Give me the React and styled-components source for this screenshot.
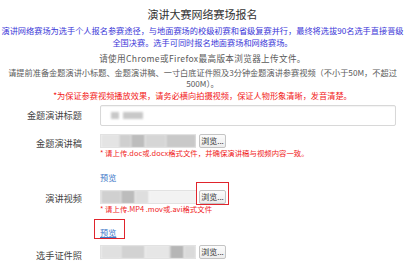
import styled, { createGlobalStyle } from "styled-components";

const Global = createGlobalStyle`
  body {
    margin: 0;
    background: #fff;
    font-family: "Noto Sans CJK SC", "Liberation Sans", sans-serif;
  }
`

const Page = styled.div`
  width: 405px;
  padding-top: 7px;
  color: #555;
`

const Title = styled.h1`
  margin: 0;
  font-size: 11px;
  font-weight: normal;
  line-height: 14px;
  text-align: center;
  color: #333;
`

const Text = styled.p`
  margin: ${props => props.top || 0}px 0 0;
  font-size: ${props => props.size || 8.2}px;
  letter-spacing: ${props => props.spacing || 0}px;
  line-height: 11.5px;
  text-align: center;
  color: ${props => props.tone === 'blue' ? '#3a36d8' : props.tone === 'red' ? '#f21818' : '#5a5a5a'};
`

const Form = styled.div`
  display: flex;
  flex-direction: column;
  gap: 8px;
  margin-top: 4px;
`

const Row = styled.div`
  display: grid;
  grid-template-columns: 82px 296px;
  column-gap: 18px;
  align-items: start;
`

const Label = styled.label`
  font-size: 9.2px;
  line-height: ${props => props.h || 15}px;
  text-align: right;
  color: #444;
  white-space: nowrap;
`

const TextInput = styled.div`
  height: 19px;
  border: 1px solid #d8d8d8;
  border-radius: 2px;
  box-shadow: inset 0 1px 1px rgba(0,0,0,0.05);
  display: flex;
  align-items: center;
  padding-left: 10px;
  gap: 4px;
`

const Blur = styled.span`
  display: inline-block;
  width: ${props => props.w}px;
  height: ${props => props.h || 7}px;
  background: ${props => props.c || '#c8c8c8'};
  filter: blur(1.2px);
`

const Field = styled.div`
  display: flex;
  flex-direction: column;
`

const FileLine = styled.div`
  display: flex;
  align-items: center;
  gap: 3px;
`

const FileBox = styled.div`
  width: 96px;
  height: 14px;
  border: 1px solid #e2e2e2;
  border-right: 0;
  box-sizing: border-box;
  display: flex;
  align-items: center;
  overflow: hidden;
  background: #fafafa;
`

const Browse = styled.span`
  position: relative;
  display: inline-block;
  height: 14px;
  width: 27px;
  box-sizing: border-box;
  border: 1px solid #c4c4c4;
  border-radius: 2px;
  background: linear-gradient(#fbfbfb, #ececec);
  font-size: 8px;
  line-height: 12px;
  text-align: center;
  color: #333;

  &.mark::after {
    content: "";
    position: absolute;
    left: -4px;
    right: -4px;
    top: -9px;
    bottom: -2px;
    border: 1.5px solid #e0242c;
  }
`

const Note = styled.div`
  font-size: 7.4px;
  line-height: 10px;
  color: #f01c1c;
  white-space: nowrap;
`

const Preview = styled.a`
  position: relative;
  align-self: flex-start;
  margin-top: ${props => props.gap || 13}px;
  font-size: 8.2px;
  line-height: 10px;
  color: #3d78c8;

  &.mark {
    text-decoration: underline;
  }

  &.mark::after {
    content: "";
    position: absolute;
    left: -6px;
    right: -9px;
    top: -8px;
    bottom: -2px;
    border: 1.5px solid #e0242c;
  }
`

const FileInput = ({ blocks, mark }) => (
  <FileLine>
    <FileBox>
      {blocks.map((b, i) => <Blur key={i} w={b[0]} h={14} c={b[1]} />)}
    </FileBox>
    <Browse className={mark ? 'mark' : ''}>浏览...</Browse>
  </FileLine>
)

function App() {
  return (
    <Page>
      <Global />
      <Title>演讲大赛网络赛场报名</Title>
      <Text tone="blue" top={4}>
        演讲网络赛场为选手个人报名参赛途径，与地面赛场的校级初赛和省级复赛并行，最终将选拔90名选手直接晋级<br />全国决赛。选手可同时报名地面赛场和网络赛场。
      </Text>
      <Text top={5} size={8.6} spacing={0.35}>请使用Chrome或Firefox最高版本浏览器上传文件。</Text>
      <Text top={2}>请提前准备金题演讲小标题、金题演讲稿、一寸白底证件照及3分钟金题演讲参赛视频（不小于50M，不超过500M）。</Text>
      <Text tone="red">*为保证参赛视频播放效果，请务必横向拍摄视频，保证人物形象清晰，发音清楚。</Text>

      <Form>
        <Row>
          <Label h={21}>金题演讲标题</Label>
          <TextInput>
            <Blur w={8} />
            <Blur w={20} />
          </TextInput>
        </Row>
        <Row>
          <Label h={19}>金题演讲稿</Label>
          <Field>
            <FileInput blocks={[[18, '#e4e4e4'], [12, '#cfcfcf'], [14, '#bdbdbd'], [22, '#d6d6d6'], [30, '#c9c9c9']]} />
            <Note>* 请上传.doc或.docx格式文件，并确保演讲稿与视频内容一致。</Note>
            <Preview gap={14}>预览</Preview>
          </Field>
        </Row>
        <Row>
          <Label h={17}>演讲视频</Label>
          <Field>
            <FileInput mark blocks={[[20, '#d0d0d0'], [14, '#bcbcbc'], [14, '#dedede'], [48, '#f2f2f2']]} />
            <Note>* 请上传.MP4 .mov或.avi格式文件</Note>
            <Preview gap={13} className="mark">预览</Preview>
          </Field>
        </Row>
        <Row>
          <Label h={21}>选手证件照</Label>
          <Field>
            <FileInput blocks={[[20, '#e0e0e0'], [24, '#d2d2d2'], [26, '#e6e6e6'], [14, '#b6b6b6'], [12, '#dadada']]} />
          </Field>
        </Row>
      </Form>
    </Page>
  );
}

export default App;
